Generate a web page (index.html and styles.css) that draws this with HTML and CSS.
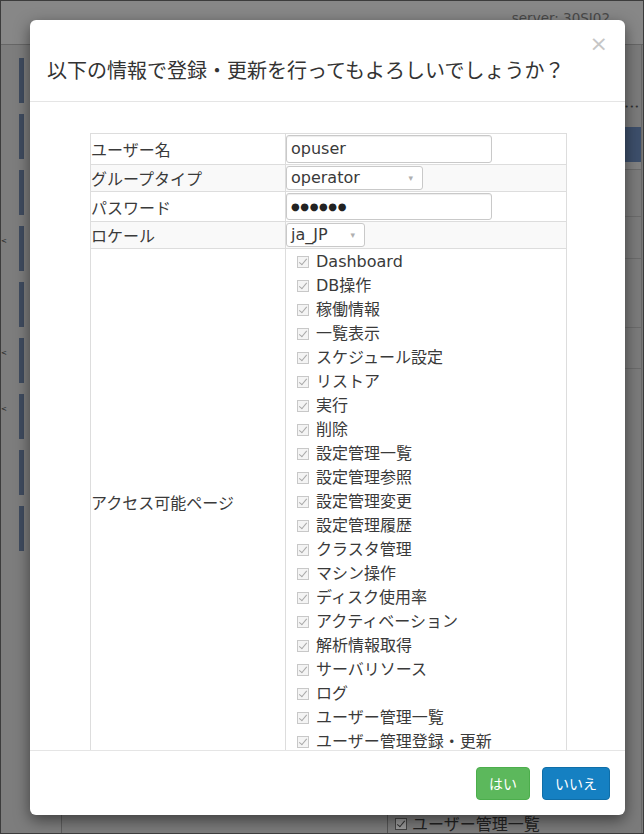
FILE: index.html
```html
<!DOCTYPE html>
<html lang="ja">
<head>
<meta charset="utf-8">
<title>ユーザー登録確認</title>
<link rel="stylesheet" href="styles.css">
</head>
<body>
<div class="screen">
  <header class="topbar"><span class="server">server: 30SI02</span></header>
  <div class="below">
    <nav class="side">
      <div class="nav-item"><span class="lead"></span><span class="bar"></span></div>
      <div class="nav-item"><span class="lead"></span><span class="bar"></span></div>
      <div class="nav-item"><span class="lead"></span><span class="bar"></span></div>
      <div class="nav-item"><span class="lead">&lt;</span><span class="bar"></span></div>
      <div class="nav-item"><span class="lead"></span><span class="bar"></span></div>
      <div class="nav-item"><span class="lead">&lt;</span><span class="bar"></span></div>
      <div class="nav-item"><span class="lead">&lt;</span><span class="bar"></span></div>
      <div class="nav-item"><span class="lead"></span><span class="bar"></span></div>
      <div class="nav-item"><span class="lead"></span><span class="bar"></span></div>
    </nav>
    <main class="content">
      <div class="dots">•••</div>
      <div class="band"></div>
      <div class="row h8"></div>
      <div class="row h47"></div>
      <div class="row h42"></div>
      <div class="row h69"></div>
      <div class="row h41"></div>
      <div class="bottom-item"><span class="cb cb-dark"></span>ユーザー管理一覧</div>
    </main>
  </div>

  <div class="modal">
    <div class="modal-header">
      <h4 class="title">以下の情報で登録・更新を行ってもよろしいでしょうか？</h4>
      <span class="close">×</span>
    </div>
    <div class="modal-body">
      <table class="info">
        <tr class="r-user">
          <td class="label">ユーザー名</td>
          <td class="value"><div class="field">opuser</div></td>
        </tr>
        <tr class="striped r-sel">
          <td class="label">グループタイプ</td>
          <td class="value"><div class="sel sel-group"><span>operator</span><span class="arrow">▾</span></div></td>
        </tr>
        <tr class="r-pw">
          <td class="label">パスワード</td>
          <td class="value"><div class="field pw">●●●●●●</div></td>
        </tr>
        <tr class="striped r-sel">
          <td class="label">ロケール</td>
          <td class="value"><div class="sel sel-loc"><span>ja_JP</span><span class="arrow">▾</span></div></td>
        </tr>
        <tr>
          <td class="label">アクセス可能ページ</td>
          <td class="value pages">
            <div class="pg"><span class="cb"></span>Dashboard</div>
            <div class="pg"><span class="cb"></span>DB操作</div>
            <div class="pg"><span class="cb"></span>稼働情報</div>
            <div class="pg"><span class="cb"></span>一覧表示</div>
            <div class="pg"><span class="cb"></span>スケジュール設定</div>
            <div class="pg"><span class="cb"></span>リストア</div>
            <div class="pg"><span class="cb"></span>実行</div>
            <div class="pg"><span class="cb"></span>削除</div>
            <div class="pg"><span class="cb"></span>設定管理一覧</div>
            <div class="pg"><span class="cb"></span>設定管理参照</div>
            <div class="pg"><span class="cb"></span>設定管理変更</div>
            <div class="pg"><span class="cb"></span>設定管理履歴</div>
            <div class="pg"><span class="cb"></span>クラスタ管理</div>
            <div class="pg"><span class="cb"></span>マシン操作</div>
            <div class="pg"><span class="cb"></span>ディスク使用率</div>
            <div class="pg"><span class="cb"></span>アクティベーション</div>
            <div class="pg"><span class="cb"></span>解析情報取得</div>
            <div class="pg"><span class="cb"></span>サーバリソース</div>
            <div class="pg"><span class="cb"></span>ログ</div>
            <div class="pg"><span class="cb"></span>ユーザー管理一覧</div>
            <div class="pg"><span class="cb"></span>ユーザー管理登録・更新</div>
          </td>
        </tr>
      </table>
    </div>
    <div class="modal-footer">
      <button class="btn btn-yes">はい</button>
      <button class="btn btn-no">いいえ</button>
    </div>
  </div>
</div>
</body>
</html>
```
FILE: styles.css
```css
* { box-sizing: border-box; }
html, body { margin: 0; padding: 0; }
body {
  font-family: "DejaVu Sans", "Noto Sans CJK JP", sans-serif;
  color: #333;
}
.screen {
  position: relative;
  width: 644px;
  height: 834px;
  border: 1px solid #3c3c3c;
  background: #7b7b7b;
  overflow: hidden;
  display: flex;
  flex-direction: column;
}
.topbar {
  flex: none;
  height: 44px;
  background: #878787;
  border-bottom: 1px solid #666;
  display: flex;
  justify-content: flex-end;
  padding: 9px 33px 0 0;
}
.server { font-size: 13.5px; line-height: 16px; color: #4a4a4a; }
.below { flex: 1; display: flex; min-height: 0; }
.side {
  flex: none;
  width: 61px;
  background: #7d7d7d;
  border-right: 1px solid #5e5e5e;
  padding-top: 13px;
}
.nav-item { height: 56px; display: flex; align-items: flex-start; }
.lead {
  width: 18px;
  padding-top: 12px;
  font-size: 7px;
  line-height: 1;
  color: #1c1c1c;
}
.bar { width: 5px; height: 45px; background: #3f4b5f; }
.content {
  flex: 1;
  display: flex;
  flex-direction: column;
  padding-top: 58px;
  margin-right: 1px;
  border-right: 1px solid #6a6a6a;
}
.dots {
  align-self: flex-end;
  margin-right: 1px;
  font-size: 7px;
  letter-spacing: 1px;
  line-height: 8px;
  color: #2e2e2e;
}
.band { margin-top: 16px; height: 35px; background: #3d4f6b; }
.row { border-bottom: 1px solid #6b6b6b; }
.h8 { height: 8px; background: #828282; }
.h47 { height: 47px; }
.h42 { height: 42px; }
.h69 { height: 69px; }
.h41 { height: 41px; }
.bottom-item {
  margin-top: auto;
  margin-left: 325px;
  margin-bottom: -6px;
  height: 26px;
  border-left: 1px solid #555;
  padding: 3px 0 0 7px;
  display: flex;
  align-items: flex-start;
  gap: 5px;
  font-size: 16px;
  line-height: 18px;
  color: #222;
}

/* checkbox */
.cb {
  position: relative;
  flex: none;
  width: 12px;
  height: 12px;
  border: 1px solid #c8c8c8;
  background: #f4f4f4;
}
.cb::after {
  content: "";
  position: absolute;
  left: 3px;
  top: 0px;
  width: 3px;
  height: 7px;
  border: solid #a9a9a9;
  border-width: 0 1.5px 1.5px 0;
  transform: rotate(40deg);
}
.cb-dark { margin-top: 2px; border-color: #444; background: #9a9a9a; }
.cb-dark::after { border-color: #333; }

/* modal */
.modal {
  position: absolute;
  left: 29px;
  top: 19px;
  width: 595px;
  height: 795px;
  background: #fff;
  border-radius: 6px;
  box-shadow: 0 5px 15px rgba(0, 0, 0, 0.5);
  display: flex;
  flex-direction: column;
  overflow: hidden;
}
.modal-header {
  flex: none;
  position: relative;
  height: 82px;
  padding: 35px 17px 0;
  border-bottom: 1px solid #e5e5e5;
}
.title {
  margin: 0;
  font-size: 20px;
  font-weight: normal;
  line-height: 30px;
  color: #333;
  font-family: "Noto Sans CJK JP", sans-serif;
}
.close {
  position: absolute;
  top: 13px;
  right: 17px;
  font-size: 22px;
  line-height: 1;
  color: #c6c6c6;
}
.modal-body {
  flex: 1;
  min-height: 0;
  overflow: hidden;
  padding: 31px 59px 0 60px;
}
.info {
  width: 477px;
  border-collapse: collapse;
  border: 1px solid #ddd;
}
.info td {
  border: 1px solid #ddd;
  padding: 0;
  font-size: 16px;
  color: #3a3a3a;
  vertical-align: middle;
}
.info td.label { width: 195px; }
.info td.value { padding: 1px 0; }
.striped td { background: #f9f9f9; }
.field {
  width: 206px;
  height: 28px;
  border: 1px solid #c9c9c9;
  border-radius: 3px;
  box-shadow: inset 0 1px 1px rgba(0, 0, 0, 0.075);
  padding: 0 4px;
  font-size: 16px;
  line-height: 26px;
  background: #fff;
}
.pw {
  height: 27px;
  font-size: 10px;
  letter-spacing: 0.6px;
  line-height: 25px;
  color: #222;
}
.sel {
  height: 24px;
  border: 1px solid #c9c9c9;
  border-radius: 3px;
  padding: 0 9px 0 4px;
  display: flex;
  justify-content: space-between;
  align-items: center;
  font-size: 16px;
  line-height: 22px;
  background: #fff;
}
.sel-group { width: 137px; }
.sel-loc { width: 79px; }
.arrow { font-size: 9px; color: #b0b0b0; }
.info td.pages { padding: 0 0 0 11px; vertical-align: top; }
.pg {
  display: flex;
  align-items: center;
  gap: 7px;
  height: 24px;
  font-size: 16px;
  line-height: 24px;
  white-space: nowrap;
}
.pg:first-child { margin-top: 1px; }
.modal-footer {
  flex: none;
  border-top: 1px solid #e5e5e5;
  padding: 16px 15px 15px;
  display: flex;
  justify-content: flex-end;
  gap: 12px;
}
.btn {
  font-family: "Noto Sans CJK JP", sans-serif;
  font-size: 14px;
  line-height: 19px;
  padding: 6px 12px;
  border: 1px solid;
  border-radius: 4px;
  color: #fff;
  cursor: pointer;
}
.btn-yes { background: #5cb85c; border-color: #4cae4c; }
.btn-no { background: #1580c2; border-color: #0f6ea8; }
```
